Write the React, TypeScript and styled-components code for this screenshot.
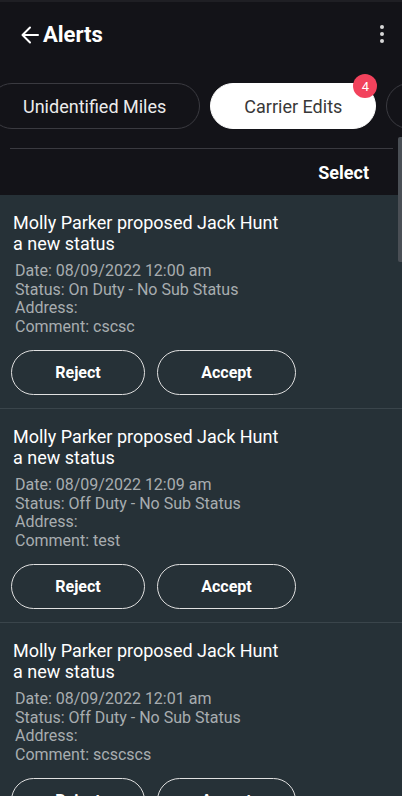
import React from 'react'
import styled, { createGlobalStyle } from 'styled-components'

const GlobalStyle = createGlobalStyle`
  html, body {
    margin: 0;
    padding: 0;
    background: #263137;
    overflow: hidden;
  }
  body {
    font-family: Roboto, "Noto Sans", "Liberation Sans", sans-serif;
  }
`

type Alert = {
  date: string
  status: string
  comment: string
}

const alerts: Alert[] = [
  { date: '08/09/2022 12:00 am', status: 'On Duty - No Sub Status', comment: 'cscsc' },
  { date: '08/09/2022 12:09 am', status: 'Off Duty - No Sub Status', comment: 'test' },
  { date: '08/09/2022 12:01 am', status: 'Off Duty - No Sub Status', comment: 'scscscs' },
]

function App() {
  return (
    <Screen>
      <GlobalStyle />
      <Header>
        <TopBar>
          <BackButton>
            <svg width="20" height="20" viewBox="0 0 20 20" fill="none">
              <path
                d="M18 10H3M10 2.5L2.5 10L10 17.5"
                stroke="#fff"
                strokeWidth="2"
                strokeLinecap="round"
                strokeLinejoin="round"
              />
            </svg>
          </BackButton>
          <Title>Alerts</Title>
          <Kebab>
            <Dot />
            <Dot />
            <Dot />
          </Kebab>
        </TopBar>
        <Tabs>
          <Tab>Unidentified Miles</Tab>
          <Tab active>
            Carrier Edits
            <Badge>4</Badge>
          </Tab>
          <Tab>Driver Edits</Tab>
        </Tabs>
        <Divider />
        <SelectRow>
          <SelectLink>Select</SelectLink>
        </SelectRow>
      </Header>
      <List>
        {alerts.map((a, i) => (
          <Card key={i}>
            <CardTitle>
              Molly Parker proposed Jack Hunt
              <br />a new status
            </CardTitle>
            <Details>
              <div>Date: {a.date}</div>
              <div>Status: {a.status}</div>
              <div>Address:</div>
              <div>Comment: {a.comment}</div>
            </Details>
            <Actions>
              <ActionButton width={134}>Reject</ActionButton>
              <ActionButton width={139}>Accept</ActionButton>
            </Actions>
          </Card>
        ))}
      </List>
      <ScrollThumb />
    </Screen>
  )
}

const Screen = styled.div`
  position: relative;
  width: 402px;
  height: 796px;
  overflow: hidden;
  background: #263137;
`

const Header = styled.div`
  background: #131318;
  border-top: 2px solid #1f1f24;
`

const TopBar = styled.div`
  display: flex;
  align-items: center;
  height: 64px;
  padding: 0 16px 0 20px;
`

const BackButton = styled.div`
  display: flex;
  align-items: center;
  margin-right: 3px;
  margin-top: 1px;
`

const Title = styled.h1`
  flex: 1;
  margin: 0;
  color: #fff;
  font-size: 22px;
  font-weight: 700;
`

const Kebab = styled.div`
  display: flex;
  flex-direction: column;
  gap: 3px;
  padding: 0 2px;
`

const Dot = styled.span`
  width: 4px;
  height: 4px;
  border-radius: 50%;
  background: #d8d8d8;
`

const Tabs = styled.div`
  display: flex;
  gap: 10px;
  margin: 17px 0 0 -11px;
  white-space: nowrap;
`

const Tab = styled.div<{ active?: boolean }>`
  position: relative;
  flex-shrink: 0;
  height: 46px;
  box-sizing: border-box;
  padding: 0 33px;
  display: flex;
  align-items: center;
  border-radius: 23px;
  font-size: 18px;
  border: 1px solid ${({ active }) => (active ? '#fff' : '#3a3a40')};
  background: ${({ active }) => (active ? '#fff' : 'transparent')};
  color: ${({ active }) => (active ? '#383838' : '#ececec')};
`

const Badge = styled.span`
  position: absolute;
  top: -10px;
  right: -2px;
  width: 24px;
  height: 24px;
  border-radius: 50%;
  background: #f2425c;
  color: #fff;
  font-size: 13px;
  display: flex;
  align-items: center;
  justify-content: center;
`

const Divider = styled.div`
  height: 1px;
  background: #3a3a40;
  margin: 19px 9px 0 10px;
`

const SelectRow = styled.div`
  display: flex;
  justify-content: flex-end;
  padding: 13px 33px 12px;
  line-height: 21px;
`

const SelectLink = styled.span`
  color: #fff;
  font-size: 18px;
  font-weight: 700;
`

const List = styled.div`
  display: flex;
  flex-direction: column;
`

const Card = styled.div`
  height: 214px;
  box-sizing: border-box;
  padding-top: 17px;
  border-bottom: 1px solid #3a454b;
`

const CardTitle = styled.div`
  color: #fff;
  font-size: 18px;
  line-height: 21px;
  padding-left: 13px;
`

const Details = styled.div`
  margin-top: 8px;
  padding-left: 15px;
  color: #a8adb0;
  font-size: 16px;
  line-height: 18.5px;
`

const Actions = styled.div`
  display: flex;
  gap: 12px;
  margin-top: 14px;
  padding-left: 11px;
`

const ActionButton = styled.button<{ width: number }>`
  width: ${({ width }) => width}px;
  height: 45px;
  border-radius: 23px;
  border: 1px solid #e0e0e0;
  background: transparent;
  color: #fff;
  font-family: inherit;
  font-size: 16px;
  font-weight: 700;
`

const ScrollThumb = styled.div`
  position: absolute;
  top: 137px;
  right: 0;
  width: 4px;
  height: 125px;
  border-radius: 2px 0 0 2px;
  background: #4a4f55;
`

export default App
